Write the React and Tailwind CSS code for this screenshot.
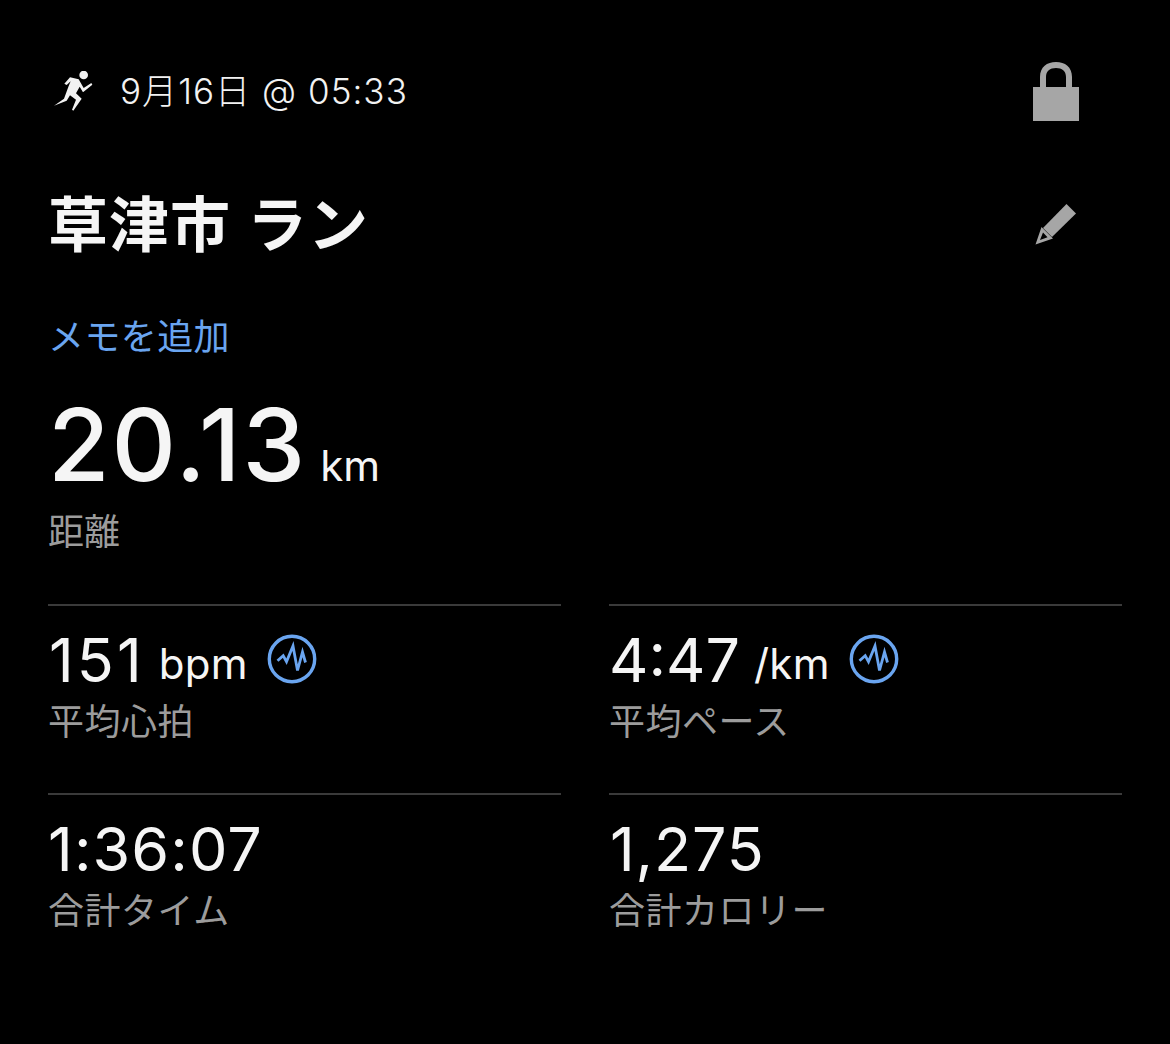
function Pulse() {
  return (
    <svg width="50" height="50" viewBox="0 0 50 50" fill="none" className="shrink-0">
      <circle cx="25" cy="25" r="22.7" stroke="#6aa5f0" strokeWidth="3.4" />
      <path d="M10.5 26.7 L16.2 21.7 L19.5 27.7 L26 12 L30.5 36.5 L35.5 18 L38.5 28.5" stroke="#6aa5f0" strokeWidth="2.8" strokeLinejoin="miter" strokeLinecap="butt" fill="none" />
    </svg>
  );
}
function Stat({ value, unit, label, pulse, track = "tracking-[0px]" }) {
  return (
    <div className="border-t-2 border-[#3a3a3a] h-[189px]">
      <div className="flex items-center h-[62px] mt-[23px]">
        <span className={"text-[61px] leading-[62px] text-[#f5f5f5] " + track}>{value}</span>
        {unit && <span className="text-[42px] leading-[62px] ml-[14px] mt-[8px] text-[#f5f5f5] tracking-[0.3px]">{unit}</span>}
        {pulse && <span className="ml-[19px] -mt-[3px]"><Pulse /></span>}
      </div>
      <div className="text-[36px] leading-[44px] mt-[9px] text-[#9c9c9c] tracking-[0.5px]">{label}</div>
    </div>
  );
}
export default function App() {
  return (
    <div className="w-[1170px] h-[1044px] bg-black overflow-hidden pl-[48px] pr-[48px] font-['Inter','Noto_Sans_CJK_JP',sans-serif]">
      <div className="flex items-start justify-between h-[175px] pr-[42px]">
        <div className="flex items-center mt-[69px]">
          <svg width="42" height="42" viewBox="9 33 126 126" className="ml-[5px] mt-[2px]" fill="#f2f2f2">
            <circle cx="101" cy="45" r="13" />
            <path d="M43 71 L60 52 L86 58 L101 84 L124 69 L127 74 L99 97 L89 80 L78 100 L95 116 L70 152 L66 149 L78 119 L60 106 L50 122 L12 137 L42 116 L56 78 L62 64 L50 75 Z" />
          </svg>
          <span className="ml-[25px] text-[35px] leading-[44px] text-[#f2f2f2] tracking-[1.05px] font-light">9月16日 @ 05:33</span>
        </div>
        <svg width="48" height="62" viewBox="0 0 48 62" className="mt-[61px]" fill="#a6a6a6">
          <path fillRule="evenodd" d="M1 26 H8 V16 C8 6 15 1 24 1 C33 1 40 6 40 16 V26 H47 V60 H1 Z M14 26 H34 V16 C34 10 30 7 24 7 C18 7 14 10 14 16 Z" />
        </svg>
      </div>
      <div className="flex items-center justify-between h-[100px] pr-[45px]">
        <span className="text-[60px] leading-[100px] font-semibold text-[#f5f5f5] tracking-[1px]">草津市 ラン</span>
        <svg width="42" height="42" viewBox="0 0 42 42" fill="#a6a6a6" className="-mt-[2px]">
          <path d="M31.5 1 L41 10.5 L17 34 L8 25 Z" />
          <path fillRule="evenodd" d="M6.5 24 L18 35.5 L0.5 41.5 Z M8 29.5 L5 37 L12.5 34.3 Z" />
        </svg>
      </div>
      <div className="text-[36px] leading-[44px] mt-[40px] text-[#6aa5f0] tracking-[0.4px]">メモを追加</div>
      <div className="flex items-baseline h-[90px] mt-[41px]">
        <span className="text-[100px] leading-[90px] font-medium tracking-[2px] text-[#f5f5f5]">20.13</span>
        <span className="text-[42px] leading-[90px] ml-[13px] text-[#f5f5f5]">km</span>
      </div>
      <div className="text-[36px] leading-[44px] mt-[20px] text-[#9c9c9c]">距離</div>
      <div className="grid grid-cols-2 gap-x-[48px] mt-[50px]">
        <Stat value="151" unit="bpm" label="平均心拍" pulse track="pl-[1px] tracking-[3px]" />
        <Stat value="4:47" unit="/km" label="平均ペース" pulse />
        <Stat value="1:36:07" label="合計タイム" track="tracking-[1.1px]" />
        <Stat value="1,275" label="合計カロリー" track="pl-[1px] tracking-[0.8px]" />
      </div>
    </div>
  );
}
